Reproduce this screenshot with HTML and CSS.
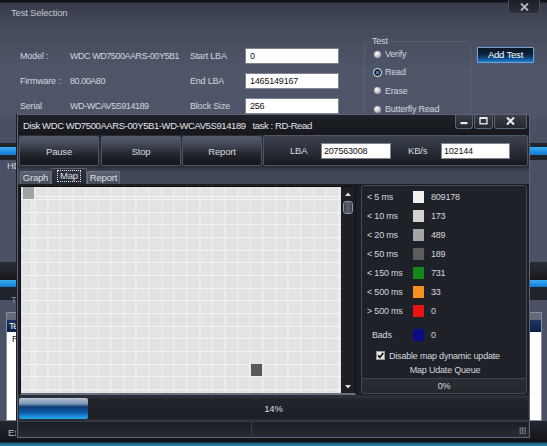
FILE: index.html
```html
<!DOCTYPE html>
<html lang="en">
<head>
<meta charset="utf-8">
<title>Test Selection</title>
<link rel="stylesheet" href="styles.css">
</head>
<body>
<div class="app">
  <div class="app-title">
    <span class="app-title-text">Test Selection</span>
    <span class="app-close"><svg width="9" height="8" viewBox="0 0 9 8"><path d="M1 0.5 L8 7.5 M8 0.5 L1 7.5" stroke="#b4b8c0" stroke-width="1.8"/></svg></span>
  </div>
  <div class="form">
    <div class="fields">
      <span class="lbl">Model :</span><span class="val">WDC WD7500AARS-00Y5B1</span><span class="lbl">Start LBA</span><span class="input">0</span>
      <span class="lbl">Firmware :</span><span class="val">80.00A80</span><span class="lbl">End LBA</span><span class="input">1465149167</span>
      <span class="lbl">Serial</span><span class="val">WD-WCAV5S914189</span><span class="lbl">Block Size</span><span class="input">256</span>
    </div>
    <fieldset class="test-group">
      <legend>Test</legend>
      <div class="radios">
        <div class="radio"><span class="dot"></span>Verify</div>
        <div class="radio"><span class="dot on"></span>Read</div>
        <div class="radio"><span class="dot"></span>Erase</div>
        <div class="radio"><span class="dot"></span>Butterfly Read</div>
      </div>
    </fieldset>
    <div class="add-test">Add Test</div>
  </div>
  <div class="band-a"></div>
  <div class="band-dark b4"></div>
  <div class="bar-blue b8"></div>
  <div class="band-dark b5"></div>
  <div class="panel-hdd"><span class="bg-label">HDD</span></div>
  <div class="band-grip"></div>
  <div class="bar-blue b7"></div>
  <div class="band-dark b7"></div>
  <div class="panel-tests">
    <span class="bg-label dim">Tests</span>
    <div class="list-box">
      <div class="list-head">Test</div>
      <div class="list-body"><span class="list-row">Read</span></div>
    </div>
  </div>
  <div class="app-status"><span class="bg-label">Exit</span></div>
  <div class="app-bottom"></div>
</div>

<div class="disk-win">
  <div class="dw-title">
    <span class="dw-title-text">Disk WDC WD7500AARS-00Y5B1-WD-WCAV5S914189&nbsp;&nbsp; task : RD-Read</span>
    <div class="dw-ctrls">
      <span class="ctrl ctrl-min"><svg width="18" height="14" viewBox="0 0 18 14"><rect x="5.5" y="8" width="7" height="2.2" fill="#ececec"/></svg></span>
      <span class="ctrl ctrl-max"><svg width="19" height="14" viewBox="0 0 19 14"><rect x="6" y="3.8" width="7" height="6" fill="none" stroke="#ececec" stroke-width="1.3"/><rect x="6" y="3.2" width="7" height="1.8" fill="#ececec"/></svg></span>
      <span class="ctrl ctrl-close"><svg width="33" height="14" viewBox="0 0 33 14"><path d="M13 3.5 L20 10.5 M20 3.5 L13 10.5" stroke="#ececec" stroke-width="2"/></svg></span>
    </div>
  </div>
  <div class="toolbar">
    <div class="tb-btn">Pause</div>
    <div class="tb-btn gap2">Stop</div>
    <div class="tb-btn">Report</div>
    <div class="tb-panel">
      <span class="tb-lbl lba">LBA</span><span class="tb-input w70">207563008</span>
      <span class="tb-lbl kbs">KB/s</span><span class="tb-input w69">102144</span>
    </div>
  </div>
  <div class="tabs">
    <span class="tab t-graph">Graph</span>
    <span class="tab t-map active"><span class="focus">Map</span></span>
    <span class="tab t-report">Report</span>
  </div>
  <div class="content">
    <div class="map-frame">
      <div class="map">
        <span class="cell c-gray"></span>
        <span class="cell c-dark"></span>
      </div>
      <div class="vscroll">
        <svg class="arrow" width="14" height="8" viewBox="0 0 14 8"><polygon points="4,6 7,2.5 10,6" fill="#dcdcdc"/></svg>
        <span class="thumb"></span>
        <span class="vs-space"></span>
        <svg class="arrow" width="14" height="8" viewBox="0 0 14 8"><polygon points="4,2 7,5.5 10,2" fill="#dcdcdc"/></svg>
      </div>
    </div>
    <div class="legend">
      <div class="lg-rows">
        <span class="lg-lbl">&lt; 5 ms</span><span class="sw sw1"></span><span class="lg-val">809178</span>
        <span class="lg-lbl">&lt; 10 ms</span><span class="sw sw2"></span><span class="lg-val">173</span>
        <span class="lg-lbl">&lt; 20 ms</span><span class="sw sw3"></span><span class="lg-val">489</span>
        <span class="lg-lbl">&lt; 50 ms</span><span class="sw sw4"></span><span class="lg-val">189</span>
        <span class="lg-lbl">&lt; 150 ms</span><span class="sw sw5"></span><span class="lg-val">731</span>
        <span class="lg-lbl">&lt; 500 ms</span><span class="sw sw6"></span><span class="lg-val">33</span>
        <span class="lg-lbl">&gt; 500 ms</span><span class="sw sw7"></span><span class="lg-val">0</span>
      </div>
      <div class="lg-rows lg-bads">
        <span class="lg-lbl bads">Bads</span><span class="sw sw8"></span><span class="lg-val">0</span>
      </div>
      <div class="lg-check">
        <svg width="9" height="9" viewBox="0 0 9 9"><rect x="0.5" y="0.5" width="8" height="8" fill="#e6e6e6" stroke="#9a9a9a"/><path d="M2 4.3 L3.9 6.4 L7.2 2" fill="none" stroke="#111" stroke-width="1.6"/></svg>
        <span>Disable map dynamic update</span>
      </div>
      <div class="lg-queue-title">Map Udate Queue</div>
      <div class="lg-queue">0%</div>
    </div>
  </div>
  <div class="progress">
    <div class="progress-fill" style="width: 13.6%"></div>
    <span class="progress-text">14%</span>
  </div>
  <div class="status">
    <span class="st-cell st-left"></span>
    <span class="st-cell st-right"><span class="grip"></span></span>
  </div>
</div>
</body>
</html>
```

FILE: styles.css
```css
* { box-sizing: border-box; }
html, body { margin: 0; padding: 0; }
body {
  width: 547px;
  height: 446px;
  overflow: hidden;
  position: relative;
  background: #101216;
  font-family: "Liberation Sans", Arial, sans-serif;
  font-size: 9px;
  letter-spacing: -0.2px;
  color: #d5d8de;
}

/* ---------- background window ---------- */
.app {
  width: 547px;
  height: 446px;
  display: flex;
  flex-direction: column;
  background: #4b5164;
}
.app-title {
  height: 24px;
  flex: none;
  display: flex;
  align-items: flex-start;
  background: linear-gradient(#121419 0, #121419 2px, #363b49 3px, #434959 24px);
}
.app-title-text {
  padding-left: 11px;
  line-height: 25px;
  font-size: 9.5px;
  color: #c3c7d0;
}
.app-close {
  margin-left: auto;
  margin-right: 7px;
  width: 32px;
  height: 14px;
  display: flex;
  align-items: center;
  justify-content: center;
  background: linear-gradient(#1c1e24, #2c3039);
  border: 1px solid #444a58;
  border-top: none;
  border-radius: 0 0 3px 3px;
}

.form {
  height: 95px;
  flex: none;
  display: flex;
  align-items: flex-start;
  background: linear-gradient(#444a5a, #50566a 50%, #4f5568);
}
.fields {
  display: grid;
  grid-template-columns: 50px 120px 55px 94px;
  grid-auto-rows: 25px;
  align-items: center;
  margin: 19px 0 0 20px;
}
.lbl, .val { color: #d2d5dc; white-space: nowrap; }
.val { letter-spacing: -0.45px; }
.input {
  height: 16px;
  background: #fff;
  border: 1px solid #7d8390;
  color: #111;
  padding-left: 4px;
  line-height: 14px;
}
.test-group {
  margin: 12px 0 0 25px;
  padding: 0 0 0 8px;
  width: 107px;
  height: 96px;
  border: 1px solid rgba(205, 210, 222, 0.1);
  border-radius: 3px;
  min-width: 0;
}
.test-group legend {
  padding: 0;
  margin-left: -1px;
  line-height: 11px;
  color: #d2d5dc;
}
.radios { margin-top: -2px; display: flex; flex-direction: column; }
.radio {
  height: 18.3px;
  display: flex;
  align-items: center;
  gap: 3px;
  color: #d2d5dc;
}
.dot {
  width: 9px;
  height: 9px;
  border-radius: 50%;
  border: 1px solid #5a5f6b;
  background: radial-gradient(circle at 40% 35%, #ffffff 0, #d6d6d6 35%, #8c8c8c 100%);
  flex: none;
}
.dot.on {
  border: 1.5px solid #eef2f6;
  background: radial-gradient(circle, #3a7ccc 0, #3a7ccc 1.4px, #1a2230 2px);
}
.add-test {
  margin: 22.7px 0 0 6px;
  width: 57px;
  height: 16px;
  border: 1px solid #7f9cc0;
  border-radius: 1px;
  background: linear-gradient(#0a1626 0%, #0c1f38 40%, #0f4c8a 75%, #1b86d6 100%);
  color: #ffffff;
  font-size: 9.5px;
  text-align: center;
  line-height: 14px;
  box-shadow: 0 0 2px rgba(40, 140, 230, 0.6);
}

.band-a { height: 24px; flex: none; background: #4a5063; }
.band-dark { flex: none; background: #202329; }
.b4 { height: 4px; }
.b5 { height: 5px; }
.b7 { height: 7px; }
.b8 { height: 8px; }
.bar-blue { flex: none; background: linear-gradient(#37adf2, #1478d2); }
.panel-hdd {
  height: 102px;
  flex: none;
  background: #4b5164;
  padding-left: 7px;
}
.bg-label { display: block; line-height: 12px; color: #cfd2d8; font-size: 9.5px; }
.bg-label.dim { color: #8a8f9a; padding-left: 5px; }
.band-grip { height: 18px; flex: none; background: linear-gradient(#2a2d35, #17191e); }
.panel-tests {
  height: 127px;
  flex: none;
  background: linear-gradient(#202329 0, #202329 6px, #4b5164 6px);
  padding: 0 5px 0 6px;
}
.list-box {
  margin-top: 6px;
  height: 109px;
  border: 1px solid #8a8f9b;
  display: flex;
  flex-direction: column;
  padding-top: 7px;
  background: linear-gradient(#646a78 0, #646a78 7px, #fff 7px);
}
.list-head {
  height: 12px;
  background: linear-gradient(#1b3668, #0c1f46);
  color: #fff;
  line-height: 12px;
  padding-left: 2px;
}
.list-body { flex: 1; background: #fff; padding: 2px 0 0 5px; color: #111; }
.list-row { line-height: 10px; }
.app-status {
  height: 19px;
  flex: none;
  background: linear-gradient(#23262e, #15171b);
  padding: 6px 0 0 8px;
}
.app-status .bg-label { color: #b9bdc6; }
.app-bottom { height: 6px; flex: none; background: linear-gradient(#0f1114 0, #0f1114 2px, #1f5a78 3px, #2b86ae 6px); }

/* ---------- disk window ---------- */
.disk-win {
  position: absolute;
  left: 17px;
  top: 114px;
  width: 513px;
  height: 324px;
  border: 1px solid #5e6474;
  background: #2a2d36;
  display: flex;
  flex-direction: column;
  padding-bottom: 1px;
  box-shadow: -1px 0 0 #1a1c21;
}
.dw-title {
  height: 20px;
  flex: none;
  display: flex;
  align-items: flex-start;
  background: linear-gradient(#1e2128, #16181d);
}
.dw-title-text {
  padding-left: 5px;
  line-height: 21px;
  font-size: 9.5px;
  letter-spacing: -0.4px;
  color: #e2e5ea;
  white-space: nowrap;
}
.dw-ctrls { margin-left: auto; margin-right: 2px; display: flex; gap: 1px; }
.ctrl {
  height: 14px;
  display: flex;
  background: linear-gradient(#3a3e49, #23262d);
  border: 1px solid #5d6372;
  border-top: none;
  border-radius: 0 0 3px 3px;
}
.ctrl svg { display: block; margin: -1px; }
.ctrl-min { width: 18px; }
.ctrl-max { width: 19px; }
.ctrl-close { width: 33px; }

.toolbar {
  height: 32px;
  flex: none;
  display: flex;
  padding: 1px;
  gap: 1px;
}
.tb-btn {
  width: 80px;
  height: 30px;
  flex: none;
  border: 1px solid #4f5564;
  border-radius: 2px;
  background: linear-gradient(#555b6a 0%, #3c414e 35%, #20232a 65%, #14161a 100%);
  color: #d6d9df;
  text-align: center;
  line-height: 29px;
  font-size: 9.5px;
}
.tb-btn.gap2 { margin-left: 1px; }
.tb-panel {
  flex: 1;
  height: 31px;
  margin-top: -1px;
  border: 1px solid #4f5564;
  border-radius: 2px;
  background: linear-gradient(#3d4250 0%, #2b2f39 50%, #16181d 100%);
  display: flex;
  align-items: center;
  padding-left: 26px;
}
.tb-lbl { color: #d6d9df; font-size: 9.5px; }
.tb-lbl.lba { width: 31px; }
.tb-lbl.kbs { width: 33px; margin-left: 17px; }
.tb-input {
  height: 16px;
  background: #fff;
  border: 1px solid #80868f;
  color: #111;
  line-height: 14px;
  padding-left: 2px;
}
.w70 { width: 70px; }
.w69 { width: 69px; }

.tabs {
  height: 18px;
  flex: none;
  display: flex;
  align-items: flex-end;
  padding-left: 2px;
  background: linear-gradient(#2c303a 0, #3f4452 4px, #434856 100%);
  border-bottom: 1px solid #1b1d22;
}
.tab {
  height: 13px;
  border: 1px solid #6a7080;
  border-bottom: none;
  border-radius: 2px 2px 0 0;
  background: linear-gradient(#5d6372, #474c5a);
  color: #dde0e5;
  line-height: 12px;
  text-align: center;
  font-size: 9.5px;
}
.t-graph { width: 31px; }
.t-map { width: 36px; }
.t-report { width: 33px; }
.tab.active {
  height: 16px;
  background: linear-gradient(#2f3441, #252933);
  border-color: #5b6170;
  padding-top: 1px;
}
.focus {
  display: inline-block;
  padding: 0 2px;
  line-height: 10px;
  border: 1px dotted #e8e8e8;
}

.content {
  height: 210px;
  flex: none;
  display: flex;
  align-items: flex-start;
  padding: 0 2px;
  gap: 5px;
  background: #1c1e24;
}
.map-frame {
  margin-top: 1px;
  width: 336px;
  height: 209px;
  display: flex;
  border: 1px solid #0e0f12;
  border-bottom: 2px solid #6a707e;
}
.map {
  width: 320px;
  height: 206px;
  display: grid;
  grid-template-columns: repeat(25, 12.67px);
  grid-auto-rows: 12.67px;
  padding-left: 1.7px;
  overflow: hidden;
  background-color: #e3e3e3;
  background-image:
    repeating-linear-gradient(to right, #f3f3f3 0 1px, transparent 1px 12.67px),
    repeating-linear-gradient(to bottom, #f3f3f3 0 1px, transparent 1px 12.67px);
  background-position: 13.4px 0, 0 12px;
}
.cell { width: 11.7px; height: 12px; }
.c-gray { grid-column: 1; grid-row: 1; background: #a3a3a3; }
.c-dark { grid-column: 19; grid-row: 15; background: #585858; }
.vscroll {
  width: 14px;
  flex: none;
  background: #1d1f26;
  display: flex;
  flex-direction: column;
  align-items: center;
  padding: 3px 0 2px;
}
.arrow { display: block; flex: none; }
.thumb {
  margin-top: 3px;
  width: 10px;
  height: 13px;
  flex: none;
  border: 1px solid #8a909c;
  border-radius: 3px;
  background: linear-gradient(to right, #3c414d, #5b6170 50%, #3c414d);
}
.vs-space { flex: 1; }

.legend {
  width: 166px;
  height: 209px;
  border: 1px solid #444957;
  border-radius: 3px;
  background: #1f2128;
  display: flex;
  flex-direction: column;
  color: #d5d8de;
}
.lg-rows {
  display: grid;
  grid-template-columns: 39px 11px auto;
  grid-auto-rows: 19px;
  align-items: center;
  column-gap: 7px;
  padding: 1.5px 0 0 5px;
}
.lg-bads { padding-top: 5px; }
.lg-lbl { white-space: nowrap; }
.lg-lbl.bads { padding-left: 5px; }
.sw { width: 11px; height: 12px; }
.sw1 { background: #f0f0f0; }
.sw2 { background: #d3d3d3; }
.sw3 { background: #a5a5a5; }
.sw4 { background: #5d5d5d; }
.sw5 { background: #14891a; }
.sw6 { background: #f5901f; }
.sw7 { background: #e8140f; }
.sw8 { background: #0c0c86; }
.lg-check {
  margin-top: 4px;
  height: 14px;
  display: flex;
  align-items: center;
  gap: 4px;
  padding-left: 14px;
}
.lg-check svg { display: block; }
.lg-queue-title {
  height: 14px;
  line-height: 14px;
  text-align: center;
  padding-left: 2px;
}
.lg-queue {
  margin-top: auto;
  height: 15px;
  border-top: 1px solid #3e424e;
  background: linear-gradient(#2a2d35, #23262d);
  text-align: center;
  line-height: 14px;
  border-radius: 0 0 2px 2px;
}

.progress {
  margin: 2px 1px 0;
  height: 22px;
  flex: none;
  position: relative;
  display: flex;
  background: linear-gradient(#23262d, #1b1d23);
  border-top: 1px solid #2e323b;
}
.progress-fill {
  height: 100%;
  border-radius: 2px;
  background: linear-gradient(#b2c4d8 0%, #7d96b2 28%, #0c3a74 42%, #0f5cab 70%, #23aef2 100%);
}
.progress-text {
  position: absolute;
  inset: 0;
  text-align: center;
  line-height: 22px;
  font-size: 9.5px;
  color: #d8dbe1;
}

.status {
  margin: 2px 1px 0;
  height: 15px;
  flex: none;
  display: flex;
  background: linear-gradient(#1b1e24, #262a33);
  border-top: 1px solid #383c47;
}
.st-cell { height: 100%; }
.st-left { width: 233px; border-right: 1px solid #3a3e48; }
.st-right { flex: 1; display: flex; justify-content: flex-end; align-items: flex-end; }
.grip {
  width: 7px;
  height: 7px;
  margin: 0 2px 2px 0;
  background-image: radial-gradient(circle, #7d8390 0.8px, transparent 1px);
  background-size: 2.5px 2.5px;
}
```
